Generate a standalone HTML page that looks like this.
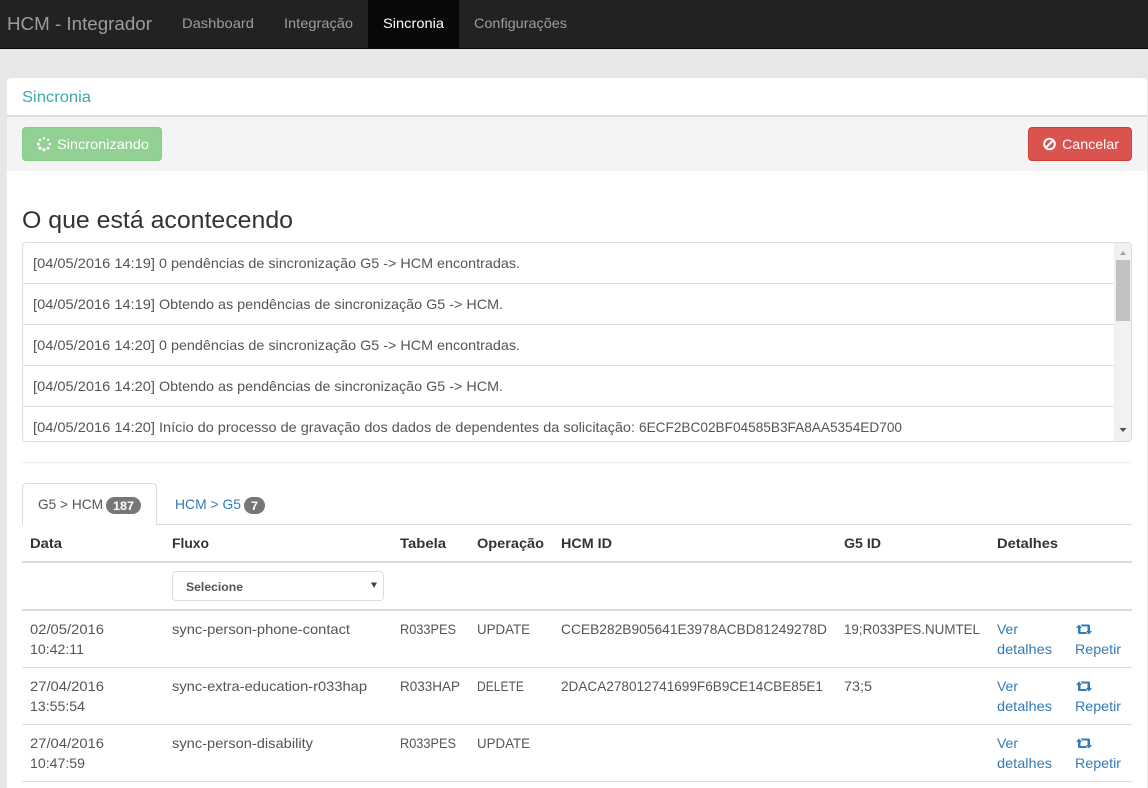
<!DOCTYPE html>
<html lang="pt-BR">
<head>
<meta charset="utf-8">
<title>HCM - Integrador</title>
<style>
html,body{margin:0;padding:0;width:1148px;height:788px;overflow:hidden;background:#e6e7e9;font-family:"Liberation Sans",sans-serif}
.b{position:absolute;box-sizing:border-box}
svg{position:absolute;left:0;top:0}
text{font-family:"Liberation Sans",sans-serif;font-size:14px;fill:#555}
.n{fill:#9d9d9d}
.h{font-weight:bold;fill:#333}
.l{fill:#337ab7}
.w{fill:#fff}
</style>
</head>
<body>
<div class="b" style="left:0;top:0;width:1148px;height:49px;background:#222;border-bottom:1px solid #080808"></div>
<div class="b" style="left:368px;top:0;width:91px;height:48px;background:#080808"></div>
<div class="b" style="left:7px;top:78px;width:1140px;height:710px;background:#fff;border-radius:4px 4px 0 0"></div>
<div class="b" style="left:7px;top:115px;width:1140px;height:2px;background:#ddd"></div>
<div class="b" style="left:7px;top:117px;width:1140px;height:54px;background:#f4f4f4"></div>
<div class="b" style="left:22px;top:127px;width:140px;height:34px;background:#92d094;border:1px solid #86cc88;border-radius:4px"></div>
<div class="b" style="left:1028px;top:127px;width:104px;height:34px;background:#d9534f;border:1px solid #d43f3a;border-radius:4px"></div>
<div class="b" style="left:22px;top:242px;width:1110px;height:200px;border:1px solid #ddd;border-radius:4px;background:#fff"></div>
<div class="b" style="left:23px;top:283px;width:1092px;height:1px;background:#ddd"></div>
<div class="b" style="left:23px;top:324px;width:1092px;height:1px;background:#ddd"></div>
<div class="b" style="left:23px;top:365px;width:1092px;height:1px;background:#ddd"></div>
<div class="b" style="left:23px;top:406px;width:1092px;height:1px;background:#ddd"></div>
<div class="b" style="left:1114px;top:243px;width:17px;height:198px;background:#f1f1f1;border-radius:0 3px 3px 0"></div>
<div class="b" style="left:1116px;top:260px;width:14px;height:61px;background:#c1c1c1"></div>
<div class="b" style="left:22px;top:462px;width:1110px;height:1px;background:#eee"></div>
<div class="b" style="left:22px;top:524px;width:1110px;height:1px;background:#ddd"></div>
<div class="b" style="left:22px;top:483px;width:135px;height:42px;background:#fff;border:1px solid #ddd;border-bottom:0;border-radius:4px 4px 0 0"></div>
<div class="b" style="left:106px;top:497px;width:35px;height:17px;background:#777;border-radius:9px"></div>
<div class="b" style="left:244px;top:497px;width:21px;height:17px;background:#777;border-radius:9px"></div>
<div class="b" style="left:22px;top:561px;width:1110px;height:2px;background:#ddd"></div>
<div class="b" style="left:172px;top:571px;width:212px;height:30px;border:1px solid #ddd;border-radius:4px;background:#fff"></div>
<div class="b" style="left:22px;top:609px;width:1110px;height:2px;background:#ddd"></div>
<div class="b" style="left:22px;top:667px;width:1110px;height:1px;background:#ddd"></div>
<div class="b" style="left:22px;top:724px;width:1110px;height:1px;background:#ddd"></div>
<div class="b" style="left:22px;top:781px;width:1110px;height:1px;background:#ddd"></div>

<svg width="1148" height="788" viewBox="0 0 1148 788" xmlns="http://www.w3.org/2000/svg">
<text class="n" x="7" y="30" style="font-size:18px" textLength="145" lengthAdjust="spacingAndGlyphs">HCM - Integrador</text>
<text class="n" x="182" y="28" textLength="72" lengthAdjust="spacingAndGlyphs">Dashboard</text>
<text class="n" x="284" y="28" textLength="69" lengthAdjust="spacingAndGlyphs">Integração</text>
<text class="w" x="383" y="28" textLength="61" lengthAdjust="spacingAndGlyphs">Sincronia</text>
<text class="n" x="474" y="28" textLength="93" lengthAdjust="spacingAndGlyphs">Configurações</text>

<text x="22" y="102" style="font-size:16px;fill:#3ba9ab" textLength="69" lengthAdjust="spacingAndGlyphs">Sincronia</text>

<g fill="#fff">
<circle cx="44" cy="138.300" r="1.300"/><circle cx="48.100" cy="139.900" r="1.200"/><circle cx="49.700" cy="144" r="1.200"/><circle cx="48.100" cy="148.100" r="1.500"/><circle cx="44" cy="149.700" r="1.700"/><circle cx="39.900" cy="148.100" r="1.700"/><circle cx="38.300" cy="144" r="1.500"/><circle cx="39.900" cy="139.900" r="1.300"/>
</g>
<text class="w" x="57" y="149" textLength="92" lengthAdjust="spacingAndGlyphs">Sincronizando</text>
<circle cx="1049.500" cy="144" r="5.300" fill="none" stroke="#fff" stroke-width="2"/>
<path d="M1046 147.500L1053 140.500" stroke="#fff" stroke-width="2" fill="none"/>
<text class="w" x="1062" y="149" textLength="57" lengthAdjust="spacingAndGlyphs">Cancelar</text>

<text x="22" y="228" style="font-size:24px;fill:#333" textLength="271" lengthAdjust="spacingAndGlyphs">O que está acontecendo</text>

<text x="33" y="268" textLength="122" lengthAdjust="spacingAndGlyphs">[04/05/2016 14:19]</text>
<text x="159" y="268" textLength="361" lengthAdjust="spacingAndGlyphs">0 pendências de sincronização G5 -&gt; HCM encontradas.</text>
<text x="33" y="309" textLength="122" lengthAdjust="spacingAndGlyphs">[04/05/2016 14:19]</text>
<text x="159" y="309" textLength="344" lengthAdjust="spacingAndGlyphs">Obtendo as pendências de sincronização G5 -&gt; HCM.</text>
<text x="33" y="350" textLength="122" lengthAdjust="spacingAndGlyphs">[04/05/2016 14:20]</text>
<text x="159" y="350" textLength="361" lengthAdjust="spacingAndGlyphs">0 pendências de sincronização G5 -&gt; HCM encontradas.</text>
<text x="33" y="391" textLength="122" lengthAdjust="spacingAndGlyphs">[04/05/2016 14:20]</text>
<text x="159" y="391" textLength="344" lengthAdjust="spacingAndGlyphs">Obtendo as pendências de sincronização G5 -&gt; HCM.</text>
<text x="33" y="432" textLength="122" lengthAdjust="spacingAndGlyphs">[04/05/2016 14:20]</text>
<text x="159" y="432" textLength="476" lengthAdjust="spacingAndGlyphs">Início do processo de gravação dos dados de dependentes da solicitação:</text>
<text x="639" y="432" textLength="263" lengthAdjust="spacingAndGlyphs">6ECF2BC02BF04585B3FA8AA5354ED700</text>
<path d="M1120 255L1123 251L1126 255Z" fill="#a3a3a3"/>
<path d="M1119.500 428L1126.500 428L1123 432Z" fill="#505050"/>

<text x="38" y="509" textLength="65" lengthAdjust="spacingAndGlyphs">G5 &gt; HCM</text>
<text class="w" x="113" y="510" style="font-size:12px;font-weight:bold" textLength="21" lengthAdjust="spacingAndGlyphs">187</text>
<text class="l" x="175" y="509" textLength="66" lengthAdjust="spacingAndGlyphs">HCM &gt; G5</text>
<text class="w" x="251" y="510" style="font-size:12px;font-weight:bold" textLength="7" lengthAdjust="spacingAndGlyphs">7</text>

<text class="h" x="30" y="548" textLength="32" lengthAdjust="spacingAndGlyphs">Data</text>
<text class="h" x="172" y="548" textLength="37" lengthAdjust="spacingAndGlyphs">Fluxo</text>
<text class="h" x="400" y="548" textLength="46" lengthAdjust="spacingAndGlyphs">Tabela</text>
<text class="h" x="477" y="548" textLength="67" lengthAdjust="spacingAndGlyphs">Operação</text>
<text class="h" x="561" y="548" textLength="51" lengthAdjust="spacingAndGlyphs">HCM ID</text>
<text class="h" x="844" y="548" textLength="37" lengthAdjust="spacingAndGlyphs">G5 ID</text>
<text class="h" x="997" y="548" textLength="61" lengthAdjust="spacingAndGlyphs">Detalhes</text>

<text x="186" y="591" style="font-size:12px;font-weight:bold" textLength="57" lengthAdjust="spacingAndGlyphs">Selecione</text>
<path d="M371 582.500L377 582.500L374 588Z" fill="#444"/>

<text x="30" y="634" textLength="74" lengthAdjust="spacingAndGlyphs">02/05/2016</text>
<text x="30" y="654" textLength="54" lengthAdjust="spacingAndGlyphs">10:42:11</text>
<text x="172" y="634" textLength="178" lengthAdjust="spacingAndGlyphs">sync-person-phone-contact</text>
<text x="400" y="634" textLength="56" lengthAdjust="spacingAndGlyphs">R033PES</text>
<text x="477" y="634" textLength="53" lengthAdjust="spacingAndGlyphs">UPDATE</text>
<text x="561" y="634" textLength="266" lengthAdjust="spacingAndGlyphs">CCEB282B905641E3978ACBD81249278D</text>
<text x="844" y="634" textLength="136" lengthAdjust="spacingAndGlyphs">19;R033PES.NUMTEL</text>
<text class="l" x="997" y="634" textLength="21" lengthAdjust="spacingAndGlyphs">Ver</text>
<text class="l" x="997" y="654" textLength="55" lengthAdjust="spacingAndGlyphs">detalhes</text>
<text class="l" x="1075" y="654" textLength="46" lengthAdjust="spacingAndGlyphs">Repetir</text>

<text x="30" y="691" textLength="74" lengthAdjust="spacingAndGlyphs">27/04/2016</text>
<text x="30" y="711" textLength="55" lengthAdjust="spacingAndGlyphs">13:55:54</text>
<text x="172" y="691" textLength="195" lengthAdjust="spacingAndGlyphs">sync-extra-education-r033hap</text>
<text x="400" y="691" textLength="60" lengthAdjust="spacingAndGlyphs">R033HAP</text>
<text x="477" y="691" textLength="47" lengthAdjust="spacingAndGlyphs">DELETE</text>
<text x="561" y="691" textLength="262" lengthAdjust="spacingAndGlyphs">2DACA278012741699F6B9CE14CBE85E1</text>
<text x="844" y="691" textLength="28" lengthAdjust="spacingAndGlyphs">73;5</text>
<text class="l" x="997" y="691" textLength="21" lengthAdjust="spacingAndGlyphs">Ver</text>
<text class="l" x="997" y="711" textLength="55" lengthAdjust="spacingAndGlyphs">detalhes</text>
<text class="l" x="1075" y="711" textLength="46" lengthAdjust="spacingAndGlyphs">Repetir</text>

<text x="30" y="748" textLength="74" lengthAdjust="spacingAndGlyphs">27/04/2016</text>
<text x="30" y="768" textLength="55" lengthAdjust="spacingAndGlyphs">10:47:59</text>
<text x="172" y="748" textLength="141" lengthAdjust="spacingAndGlyphs">sync-person-disability</text>
<text x="400" y="748" textLength="56" lengthAdjust="spacingAndGlyphs">R033PES</text>
<text x="477" y="748" textLength="53" lengthAdjust="spacingAndGlyphs">UPDATE</text>
<text class="l" x="997" y="748" textLength="21" lengthAdjust="spacingAndGlyphs">Ver</text>
<text class="l" x="997" y="768" textLength="55" lengthAdjust="spacingAndGlyphs">detalhes</text>
<text class="l" x="1075" y="768" textLength="46" lengthAdjust="spacingAndGlyphs">Repetir</text>

<g fill="#337ab7">
<path transform="translate(1076 624)" d="M0 4L3 .5L6 4H4.500V8H10L11.500 10H3.500Q2 10 2 8.500V4ZM4.500 .5H12.500Q14 .5 14 2V7H16L13 10.500L10 7H11.500V2.500H6Z"/>
<path transform="translate(1076 681)" d="M0 4L3 .5L6 4H4.500V8H10L11.500 10H3.500Q2 10 2 8.500V4ZM4.500 .5H12.500Q14 .5 14 2V7H16L13 10.500L10 7H11.500V2.500H6Z"/>
<path transform="translate(1076 738)" d="M0 4L3 .5L6 4H4.500V8H10L11.500 10H3.500Q2 10 2 8.500V4ZM4.500 .5H12.500Q14 .5 14 2V7H16L13 10.500L10 7H11.500V2.500H6Z"/>
</g>
</svg>
</body>
</html>
